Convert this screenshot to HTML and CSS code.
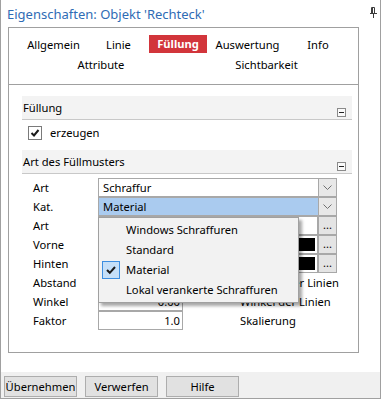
FILE: index.html
```html
<!DOCTYPE html>
<html lang="de">
<head>
<meta charset="utf-8">
<title>Eigenschaften</title>
<link rel="stylesheet" href="styles.css">
</head>
<body>
<div class="window">
  <div class="titlebar">
    <span class="title">Eigenschaften: Objekt 'Rechteck'</span>
    <svg class="pin" width="7" height="11" viewBox="0 0 7 11"><path d="M1.5 0.5h3v6h-3z M2.5 1v5.5 M0 6.5h7 M3.5 7v4" stroke="#3c3c3c" fill="none" stroke-width="1"/></svg>
  </div>
  <div class="panel">
    <div class="tabs">
      <div class="tabrow r1">
        <div class="tab">Allgemein</div>
        <div class="tab">Linie</div>
        <div class="tab"><span class="sel">Füllung</span></div>
        <div class="tab">Auswertung</div>
        <div class="tab">Info</div>
      </div>
      <div class="tabrow r2">
        <div class="tab">Attribute</div>
        <div class="tab">Sichtbarkeit</div>
      </div>
    </div>
    <div class="content">
      <div class="ghead"><span>Füllung</span><span class="minus"></span></div>
      <div class="checkrow">
        <span class="cb"><svg width="12" height="12" viewBox="0 0 12 12"><path d="M2.5 6 L5 8.5 L9.5 3" stroke="#1a1a1a" stroke-width="2" fill="none"/></svg></span>
        <span>erzeugen</span>
      </div>
      <div class="ghead"><span>Art des Füllmusters</span><span class="minus"></span></div>
      <div class="form">
        <div class="row">
          <span class="lbl">Art</span>
          <div class="combo"><span class="val">Schraffur</span><span class="dd"><svg width="9" height="5" viewBox="0 0 9 5"><path d="M0.5 0.5 L4.5 4.5 L8.5 0.5" stroke="#707070" fill="none"/></svg></span></div>
        </div>
        <div class="row">
          <span class="lbl">Kat.</span>
          <div class="combo active"><span class="val">Material</span><span class="dd"><svg width="9" height="5" viewBox="0 0 9 5"><path d="M0.5 0.5 L4.5 4.5 L8.5 0.5" stroke="#707070" fill="none"/></svg></span></div>
        </div>
        <div class="row">
          <span class="lbl">Art</span>
          <div class="field"></div><span class="dots">...</span>
        </div>
        <div class="row">
          <span class="lbl">Vorne</span>
          <div class="field"><span class="swatch"></span></div><span class="dots">...</span>
        </div>
        <div class="row">
          <span class="lbl">Hinten</span>
          <div class="field"><span class="swatch"></span></div><span class="dots">...</span>
        </div>
        <div class="row">
          <span class="lbl">Abstand</span>
          <div class="num">2.00</div><span class="desc">Abstand der Linien</span>
        </div>
        <div class="row">
          <span class="lbl">Winkel</span>
          <div class="num">0.00</div><span class="desc">Winkel der Linien</span>
        </div>
        <div class="row">
          <span class="lbl">Faktor</span>
          <div class="num">1.0</div><span class="desc">Skalierung</span>
        </div>
        <div class="popup">
          <div class="item">Windows Schraffuren</div>
          <div class="item">Standard</div>
          <div class="item checked"><span class="mark"><svg width="12" height="12" viewBox="0 0 12 12"><path d="M2 6 L4.8 8.8 L10 3" stroke="#1a1a1a" stroke-width="2" fill="none"/></svg></span>Material</div>
          <div class="item">Lokal verankerte Schraffuren</div>
        </div>
      </div>
    </div>
  </div>
  <div class="spacer"></div>
  <div class="bar">
    <button class="btn">Übernehmen</button>
    <button class="btn">Verwerfen</button>
    <button class="btn">Hilfe</button>
  </div>
</div>
</body>
</html>
```

FILE: styles.css
```css
* { box-sizing: border-box; }
body {
  margin: 0;
  background: #fff;
  font-family: "Noto Sans", "Open Sans", sans-serif;
  font-size: 11.2px;
  color: #000;
}
.window {
  width: 381px;
  height: 399px;
  border: 1px solid #a0a0a0;
  border-top: 0;
  display: flex;
  flex-direction: column;
  background: #fff;
}
.titlebar {
  height: 27px;
  flex: none;
  display: flex;
  align-items: center;
  padding-left: 6px;
  padding-right: 3px;
}
.title {
  flex: 1;
  font-size: 13px;
  color: #2f6cb5;
  white-space: nowrap;
}
.pin { align-self: flex-start; margin-top: 7px; }
.panel {
  margin-left: 7px;
  width: 351px;
  height: 326px;
  flex: none;
  border: 1px solid #a0a0a0;
  display: flex;
  flex-direction: column;
  overflow: hidden;
}
.tabs {
  height: 57px;
  flex: none;
  border-bottom: 1px solid #a0a0a0;
  padding-top: 7px;
}
.tabrow {
  display: grid;
  height: 18px;
}
.r1 { grid-template-columns: 89px 41px 78px 61px 80px; }
.r2 { grid-template-columns: 184px 147px; margin-top: 2px; }
.tab {
  display: flex;
  justify-content: center;
  align-items: center;
  height: 18px;
  white-space: nowrap;
}
.sel {
  background: #d2353b;
  color: #fff;
  font-weight: bold;
  height: 18px;
  line-height: 18px;
  padding: 0 8px;
}
.content {
  padding: 11px 6px 0 13px;
}
.ghead {
  height: 24px;
  background: #f3f3f3;
  border-bottom: 1px solid #c8c8c8;
  display: flex;
  align-items: center;
  padding-left: 1px;
  padding-bottom: 1px;
}
.minus {
  margin-left: auto;
  margin-right: 6px;
  align-self: flex-end;
  margin-bottom: 1px;
  width: 9px;
  height: 9px;
  border: 1px solid #8a8a8a;
  background: #fafafa;
  position: relative;
}
.minus::after {
  content: "";
  position: absolute;
  left: 1px;
  right: 1px;
  top: 3px;
  height: 1px;
  background: #222;
}
.checkrow {
  height: 30px;
  display: flex;
  align-items: flex-start;
  padding-top: 6px;
  padding-left: 6px;
  gap: 8px;
}
.cb {
  width: 14px;
  height: 14px;
  border: 1px solid #7a7a7a;
  background: #fff;
  display: flex;
  align-items: center;
  justify-content: center;
}
.checkrow span:last-child { line-height: 14px; }
.form {
  position: relative;
  padding-top: 4px;
  padding-left: 11px;
}
.row {
  display: flex;
  align-items: center;
  height: 19px;
}
.lbl { width: 65px; flex: none; }
.combo {
  width: 239px;
  height: 19px;
  border: 1px solid #a8a8a8;
  background: #fff;
  display: flex;
}
.combo.active { background: #aacbef; }
.combo .val {
  flex: 1;
  padding-left: 4px;
  line-height: 17px;
}
.dd {
  width: 18px;
  border-left: 1px solid #a8a8a8;
  background: #e8e8e8;
  display: flex;
  align-items: center;
  justify-content: center;
}
.field {
  width: 220px;
  height: 19px;
  border: 1px solid #a8a8a8;
  background: #fff;
  display: flex;
  padding: 2px;
}
.swatch { flex: 1; background: #000; }
.dots {
  width: 19px;
  height: 19px;
  border: 1px solid #a8a8a8;
  background: #e4e4e4;
  text-align: center;
  line-height: 15px;
  font-size: 11px;
}
.num {
  width: 85px;
  height: 19px;
  border: 1px solid #a8a8a8;
  background: #fff;
  text-align: right;
  padding-right: 2px;
  line-height: 17px;
}
.desc { margin-left: 57px; white-space: nowrap; }
.popup {
  position: absolute;
  left: 76px;
  top: 43px;
  width: 201px;
  height: 86px;
  background: #f2f2f2;
  border: 1px solid #a0a0a0;
  padding: 2px 0;
  box-shadow: 3px 3px 3px rgba(0, 0, 0, 0.35);
}
.item {
  position: relative;
  height: 20px;
  line-height: 20px;
  padding-left: 27px;
  white-space: nowrap;
}
.mark {
  position: absolute;
  left: 3px;
  top: 1px;
  width: 18px;
  height: 18px;
  border: 1px solid #3d8ee0;
  background: #c5dff8;
  display: flex;
  align-items: center;
  justify-content: center;
}
.spacer { flex: 1; }
.bar {
  height: 26px;
  flex: none;
  background: #f0f0f0;
  display: flex;
  gap: 8px;
  padding: 4px 0 1px 3px;
}
.btn {
  width: 73px;
  height: 21px;
  border: 1px solid #adadad;
  background: #e1e1e1;
  font-family: inherit;
  font-size: 11.2px;
  color: #000;
  padding: 0;
  margin: 0;
}
```
